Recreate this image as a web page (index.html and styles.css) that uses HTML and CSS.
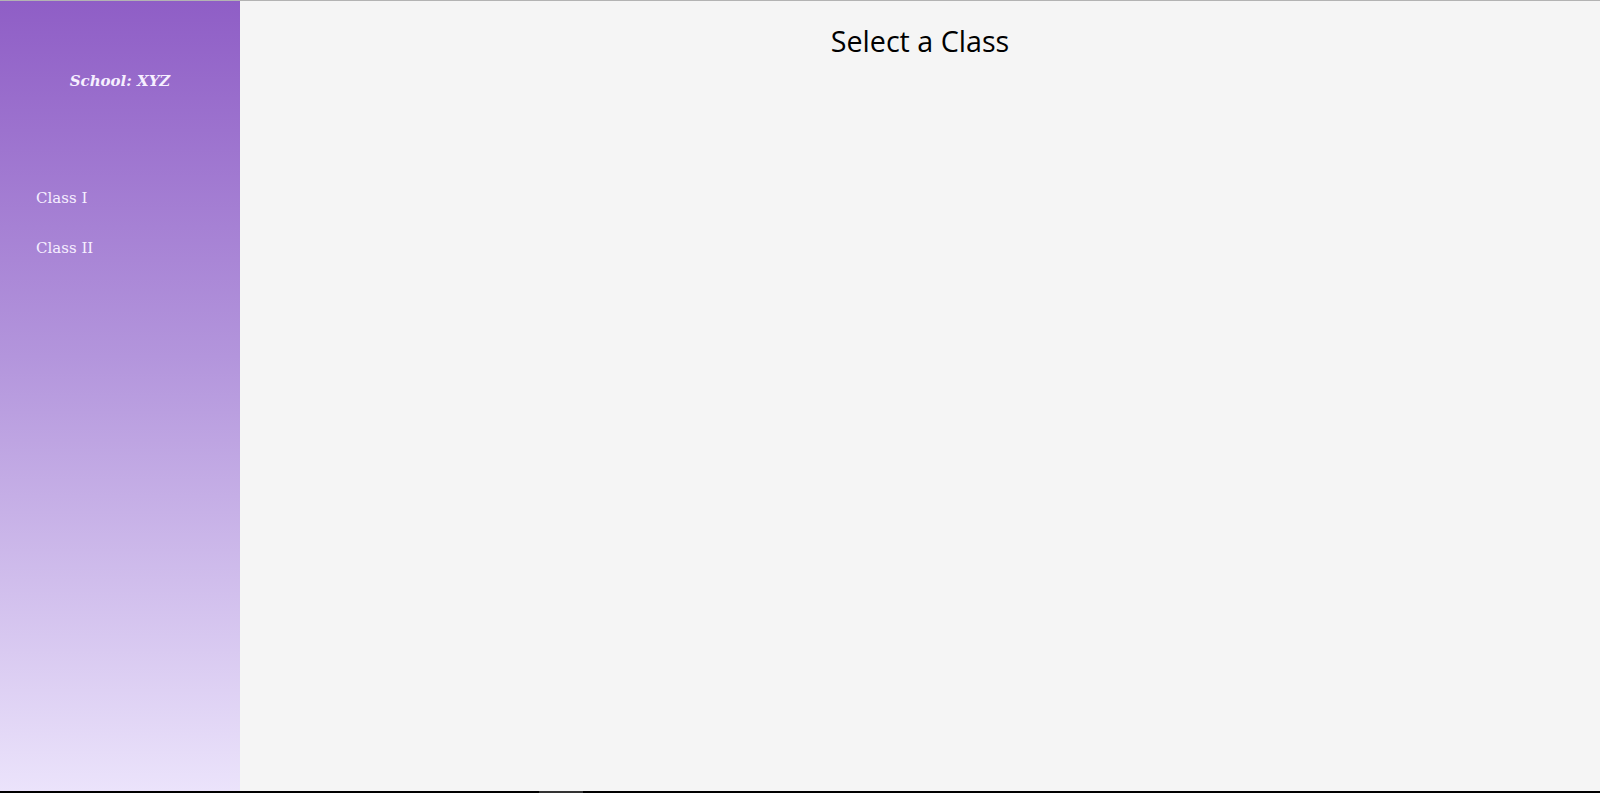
FILE: index.html
```html
<!DOCTYPE html>
<html lang="en">
<head>
<meta charset="utf-8">
<title>School: XYZ</title>
<link rel="stylesheet" href="styles.css">
</head>
<body>
<div class="app">
  <aside class="sidebar">
    <div class="school">School: XYZ</div>
    <nav class="classes">
      <a class="class-link" href="#">Class I</a>
      <a class="class-link" href="#">Class II</a>
    </nav>
  </aside>
  <main class="main">
    <h1 class="title">Select a Class</h1>
  </main>
</div>
<div class="bottom-bar"><span class="bar-thumb"></span></div>
</body>
</html>
```

FILE: styles.css
```css
html, body {
  margin: 0;
  padding: 0;
  height: 100%;
}
body {
  display: flex;
  flex-direction: column;
  background: #f5f5f5;
  border-top: 1px solid #b3b3b3;
  box-sizing: border-box;
  overflow: hidden;
}
.app {
  flex: 1;
  display: flex;
  min-height: 0;
}
.sidebar {
  width: 240px;
  flex: none;
  background: linear-gradient(to bottom, #8f5ec6 0%, #b395dc 45%, #ebe3fb 100%);
  display: flex;
  flex-direction: column;
  font-family: "DejaVu Serif", "Liberation Serif", serif;
  color: #f6efff;
}
.school {
  text-align: center;
  font-weight: bold;
  font-style: italic;
  font-size: 15px;
  margin-top: 70px;
  line-height: 20px;
}
.classes {
  display: flex;
  flex-direction: column;
  gap: 30px;
  padding-left: 36px;
  margin-top: 97px;
}
.class-link {
  color: #f6efff;
  text-decoration: none;
  font-size: 15px;
  line-height: 20px;
}
.main {
  flex: 1;
  background: #f5f5f5;
}
.title {
  margin: 20px 0 0;
  text-align: center;
  font-family: "Open Sans", sans-serif;
  font-weight: normal;
  font-size: 28.7px;
  line-height: 40px;
  color: #000;
}
.bottom-bar {
  height: 2px;
  flex: none;
  background: #000;
  position: relative;
}
.bar-thumb {
  position: absolute;
  left: 539px;
  top: 0;
  width: 44px;
  height: 2px;
  background: #333;
}
```
